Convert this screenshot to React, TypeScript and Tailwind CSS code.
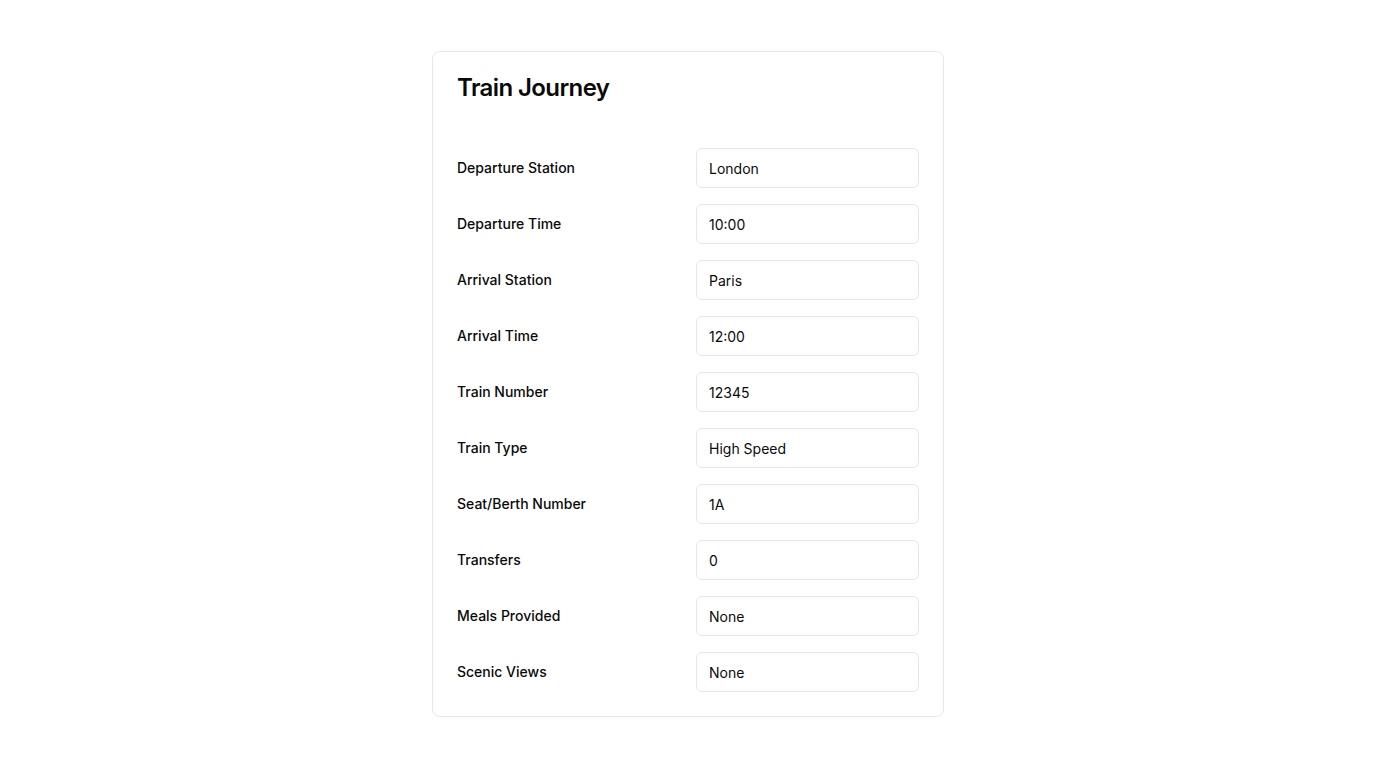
const rows: [string, string][] = [
  ["Departure Station", "London"],
  ["Departure Time", "10:00"],
  ["Arrival Station", "Paris"],
  ["Arrival Time", "12:00"],
  ["Train Number", "12345"],
  ["Train Type", "High Speed"],
  ["Seat/Berth Number", "1A"],
  ["Transfers", "0"],
  ["Meals Provided", "None"],
  ["Scenic Views", "None"],
];

export default function App() {
  return (
    <div className="min-h-screen bg-white flex justify-center pt-[51px] font-['Inter',sans-serif] text-[#0a0a0a]">
      <div className="w-[512px] h-fit rounded-lg border border-[#e5e7eb] bg-white">
        <div className="p-6">
          <h1 className="text-2xl font-semibold leading-none tracking-tight">Train Journey</h1>
        </div>
        <div className="px-6 pb-6 pt-6 flex flex-col gap-4">
          {rows.map(([label, value]) => (
            <div key={label} className="grid grid-cols-2 gap-4 items-center">
              <label className="text-sm font-medium leading-none">{label}</label>
              <input
                readOnly
                value={value}
                className="h-10 w-full rounded-md border border-[#e5e7eb] bg-white px-3 py-2 text-sm outline-none"
              />
            </div>
          ))}
        </div>
      </div>
    </div>
  );
}
